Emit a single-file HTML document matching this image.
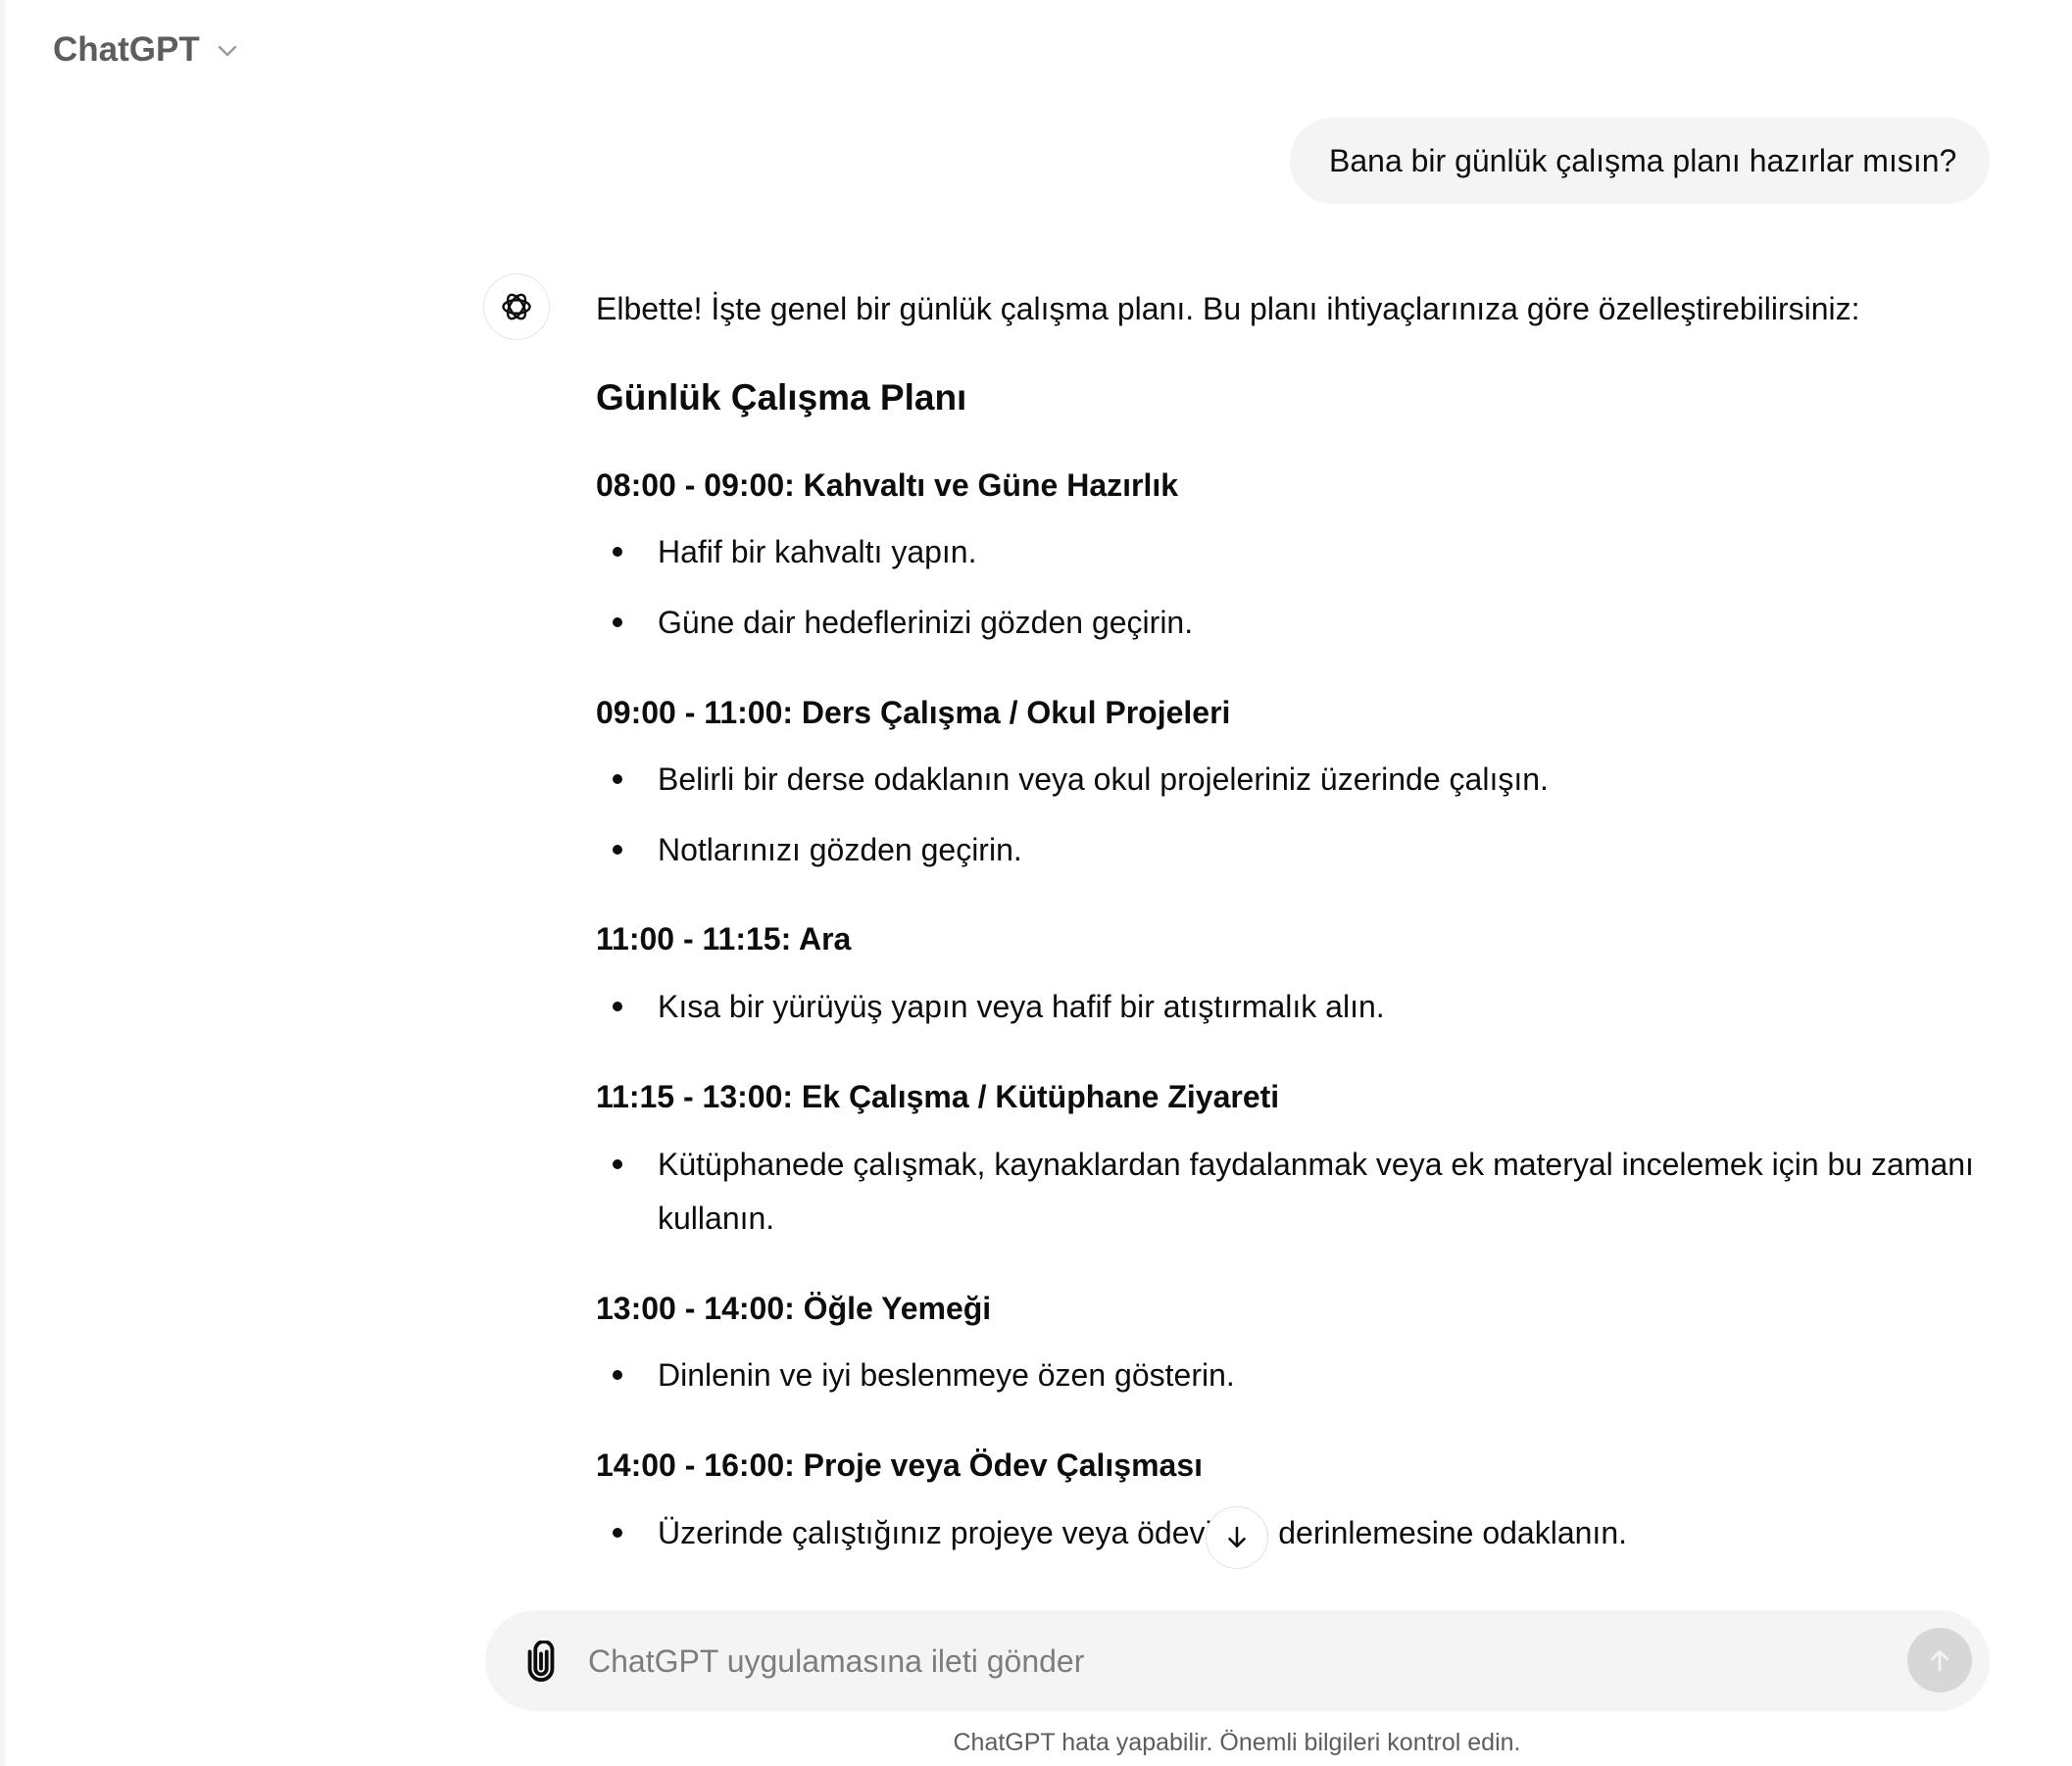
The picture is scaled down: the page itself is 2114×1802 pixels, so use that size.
<!DOCTYPE html>
<html><head><meta charset="utf-8"><style>
*{margin:0;padding:0;box-sizing:border-box}
body{width:2114px;height:1802px;background:#fff;position:relative;overflow:hidden;font-family:"Liberation Sans",sans-serif;color:#0d0d0d}
.l{position:absolute;white-space:nowrap;font-size:32px;line-height:40px;left:608px}
.b{font-weight:bold}
.li{left:671px}
.dot{position:absolute;left:625px;width:10px;height:10px;border-radius:50%;background:#0d0d0d}
</style></head><body>
<div style="position:absolute;left:0;top:0;width:5px;height:1802px;background:#f5f5f5"></div>
<div style="position:absolute;left:54px;top:31px;font-size:35px;line-height:40px;font-weight:bold;color:#5d5d5d">ChatGPT</div>
<svg style="position:absolute;left:221px;top:44px" width="22" height="16" viewBox="0 0 22 16"><path d="M3 4l8 8 8-8" fill="none" stroke="#9b9b9b" stroke-width="2.4" stroke-linecap="round" stroke-linejoin="round"/></svg>
<div style="position:absolute;left:1316px;top:120px;width:714px;height:88px;background:#f4f4f4;border-radius:44px"></div>
<div class="l" style="left:1356px;top:144px">Bana bir günlük çalışma planı hazırlar mısın?</div>
<div style="position:absolute;left:493px;top:279px;width:68px;height:68px;border-radius:50%;border:1.5px solid #e5e5e5"></div>
<svg style="position:absolute;left:509px;top:295px" width="36" height="36" viewBox="0 0 24 24"><g fill="none" stroke="#0d0d0d" stroke-width="1.6"><ellipse cx="12" cy="12" rx="9" ry="4.5"/><ellipse cx="12" cy="12" rx="9" ry="4.5" transform="rotate(60 12 12)"/><ellipse cx="12" cy="12" rx="9" ry="4.5" transform="rotate(120 12 12)"/></g></svg>
<div class="l" style="top:295px">Elbette! İşte genel bir günlük çalışma planı. Bu planı ihtiyaçlarınıza göre özelleştirebilirsiniz:</div>
<div class="l b" style="top:384px;font-size:37px;line-height:44px">Günlük Çalışma Planı</div>
<div class="l b" style="top:475px">08:00 - 09:00: Kahvaltı ve Güne Hazırlık</div>
<div class="dot" style="top:558px"></div><div class="l li" style="top:543px">Hafif bir kahvaltı yapın.</div>
<div class="dot" style="top:630px"></div><div class="l li" style="top:615px">Güne dair hedeflerinizi gözden geçirin.</div>
<div class="l b" style="top:707px">09:00 - 11:00: Ders Çalışma / Okul Projeleri</div>
<div class="dot" style="top:790px"></div><div class="l li" style="top:775px">Belirli bir derse odaklanın veya okul projeleriniz üzerinde çalışın.</div>
<div class="dot" style="top:862px"></div><div class="l li" style="top:847px">Notlarınızı gözden geçirin.</div>
<div class="l b" style="top:938px">11:00 - 11:15: Ara</div>
<div class="dot" style="top:1022px"></div><div class="l li" style="top:1007px">Kısa bir yürüyüş yapın veya hafif bir atıştırmalık alın.</div>
<div class="l b" style="top:1099px">11:15 - 13:00: Ek Çalışma / Kütüphane Ziyareti</div>
<div class="dot" style="top:1183px"></div><div class="l li" style="top:1168px">Kütüphanede çalışmak, kaynaklardan faydalanmak veya ek materyal incelemek için bu zamanı</div>
<div class="l li" style="top:1223px">kullanın.</div>
<div class="l b" style="top:1315px">13:00 - 14:00: Öğle Yemeği</div>
<div class="dot" style="top:1398px"></div><div class="l li" style="top:1383px">Dinlenin ve iyi beslenmeye özen gösterin.</div>
<div class="l b" style="top:1475px">14:00 - 16:00: Proje veya Ödev Çalışması</div>
<div class="dot" style="top:1559px"></div><div class="l li" style="top:1544px">Üzerinde çalıştığınız projeye veya ödevinize derinlemesine odaklanın.</div>
<div style="position:absolute;left:1230px;top:1537px;width:64px;height:64px;border-radius:50%;background:#fff;border:1.5px solid #e3e3e3"></div>
<svg style="position:absolute;left:1247px;top:1554px" width="30" height="30" viewBox="0 0 24 24"><path d="M12 4v15M6 13l6 6 6-6" fill="none" stroke="#0d0d0d" stroke-width="2" stroke-linecap="round" stroke-linejoin="round"/></svg>
<div style="position:absolute;left:495px;top:1643px;width:1535px;height:103px;background:#f4f4f4;border-radius:52px"></div>
<svg style="position:absolute;left:536px;top:1674px" width="32" height="42" viewBox="0 0 16 22"><path d="M11 6v9a3 3 0 0 1-6 0V5a4.5 4.5 0 0 1 9 0v10a6 6 0 0 1-12 0V6M8 7v8" fill="none" stroke="#0d0d0d" stroke-width="2" stroke-linecap="round"/></svg>
<div class="l" style="left:600px;top:1675px;color:#7d7d7d">ChatGPT uygulamasına ileti gönder</div>
<div style="position:absolute;left:1946px;top:1661px;width:66px;height:66px;border-radius:50%;background:#d7d7d7"></div>
<svg style="position:absolute;left:1964px;top:1679px" width="30" height="30" viewBox="0 0 24 24"><path d="M12 20V5M6 11l6-6 6 6" fill="none" stroke="#f4f4f4" stroke-width="2.2" stroke-linecap="round" stroke-linejoin="round"/></svg>
<div style="position:absolute;left:1262px;transform:translateX(-50%);top:1764px;white-space:nowrap;font-size:25px;line-height:28px;color:#5d5d5d">ChatGPT hata yapabilir. Önemli bilgileri kontrol edin.</div>
</body></html>
